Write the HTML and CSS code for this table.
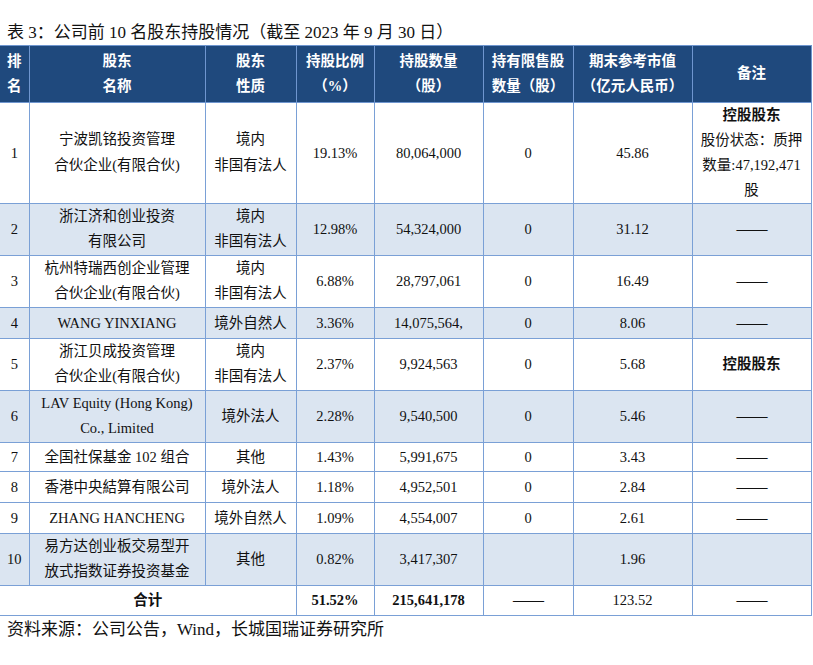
FILE: index.html
```html
<!DOCTYPE html>
<html lang="zh-CN">
<head>
<meta charset="utf-8">
<title>公司前10名股东持股情况</title>
<link rel="stylesheet" href="styles.css">
</head>
<body>
<div class="caption">表 3：公司前 10 名股东持股情况（截至 2023 年 9 月 30 日）</div>
<table class="holders">
  <colgroup>
    <col class="c-rank"><col class="c-name"><col class="c-type"><col class="c-pct">
    <col class="c-qty"><col class="c-lock"><col class="c-mv"><col class="c-note">
  </colgroup>
  <thead>
    <tr class="h-head">
      <th>排<br>名</th>
      <th>股东<br>名称</th>
      <th>股东<br>性质</th>
      <th>持股比例<br>（%）</th>
      <th>持股数量<br>（股）</th>
      <th>持有限售股<br>数量（股）</th>
      <th>期末参考市值<br>（亿元人民币）</th>
      <th>备注</th>
    </tr>
  </thead>
  <tbody>
    <tr class="h-r1">
      <td>1</td>
      <td class="two">宁波凯铭投资管理<br>合伙企业(有限合伙)</td>
      <td class="two">境内<br>非国有法人</td>
      <td>19.13%</td>
      <td>80,064,000</td>
      <td>0</td>
      <td>45.86</td>
      <td class="note"><b>控股股东</b><br>股份状态：质押<br>数量:47,192,471<br>股</td>
    </tr>
    <tr class="alt h-r2">
      <td>2</td>
      <td class="two">浙江济和创业投资<br>有限公司</td>
      <td class="two">境内<br>非国有法人</td>
      <td>12.98%</td>
      <td>54,324,000</td>
      <td>0</td>
      <td>31.12</td>
      <td class="dash">——</td>
    </tr>
    <tr class="h-r2b">
      <td>3</td>
      <td class="two">杭州特瑞西创企业管理<br>合伙企业(有限合伙)</td>
      <td class="two">境内<br>非国有法人</td>
      <td>6.88%</td>
      <td>28,797,061</td>
      <td>0</td>
      <td>16.49</td>
      <td class="dash">——</td>
    </tr>
    <tr class="alt h-s">
      <td>4</td>
      <td>WANG YINXIANG</td>
      <td>境外自然人</td>
      <td>3.36%</td>
      <td>14,075,564,</td>
      <td>0</td>
      <td>8.06</td>
      <td class="dash">——</td>
    </tr>
    <tr class="h-r2b">
      <td>5</td>
      <td class="two">浙江贝成投资管理<br>合伙企业(有限合伙)</td>
      <td class="two">境内<br>非国有法人</td>
      <td>2.37%</td>
      <td>9,924,563</td>
      <td>0</td>
      <td>5.68</td>
      <td><b>控股股东</b></td>
    </tr>
    <tr class="alt h-r2b">
      <td>6</td>
      <td class="two">LAV Equity (Hong Kong)<br>Co., Limited</td>
      <td>境外法人</td>
      <td>2.28%</td>
      <td>9,540,500</td>
      <td>0</td>
      <td>5.46</td>
      <td class="dash">——</td>
    </tr>
    <tr class="h-s0">
      <td>7</td>
      <td>全国社保基金 102 组合</td>
      <td>其他</td>
      <td>1.43%</td>
      <td>5,991,675</td>
      <td>0</td>
      <td>3.43</td>
      <td class="dash">——</td>
    </tr>
    <tr class="h-s">
      <td>8</td>
      <td>香港中央結算有限公司</td>
      <td>境外法人</td>
      <td>1.18%</td>
      <td>4,952,501</td>
      <td>0</td>
      <td>2.84</td>
      <td class="dash">——</td>
    </tr>
    <tr class="h-s">
      <td>9</td>
      <td>ZHANG HANCHENG</td>
      <td>境外自然人</td>
      <td>1.09%</td>
      <td>4,554,007</td>
      <td>0</td>
      <td>2.61</td>
      <td class="dash">——</td>
    </tr>
    <tr class="alt h-r2b">
      <td>10</td>
      <td class="two">易方达创业板交易型开<br>放式指数证券投资基金</td>
      <td>其他</td>
      <td>0.82%</td>
      <td>3,417,307</td>
      <td></td>
      <td>1.96</td>
      <td></td>
    </tr>
    <tr class="total h-s0">
      <td colspan="3"><b>合计</b></td>
      <td><b>51.52%</b></td>
      <td><b>215,641,178</b></td>
      <td class="dash">——</td>
      <td>123.52</td>
      <td class="dash">——</td>
    </tr>
  </tbody>
</table>
<div class="source">资料来源：公司公告，Wind，长城国瑞证券研究所</div>
</body>
</html>
```

FILE: styles.css
```css
html, body {
  margin: 0;
  padding: 0;
  background: #ffffff;
}

body {
  width: 813px;
  font-family: "Liberation Serif", "Noto Sans CJK SC", serif;
  color: #111111;
}

.caption {
  padding: 20px 0 0 7px;
  height: 25px;
  line-height: 25px;
  font-size: 17px;
  white-space: nowrap;
}

.holders {
  border-collapse: collapse;
  table-layout: fixed;
  width: 811px;
  font-size: 14.5px;
}

.c-rank { width: 29px; }
.c-name { width: 176px; }
.c-type { width: 91px; }
.c-pct { width: 78px; }
.c-qty { width: 109px; }
.c-lock { width: 90px; }
.c-mv { width: 119px; }
.c-note { width: 119px; }

.holders th,
.holders td {
  border: 1px solid #7aa0d6;
  padding: 0;
  text-align: center;
  vertical-align: middle;
  line-height: 20px;
  white-space: nowrap;
}

.holders td.two {
  line-height: 25.5px;
}

.holders th:first-child,
.holders td:first-child {
  border-left: none;
}

.holders th {
  background: #1f497d;
  color: #ffffff;
  font-weight: bold;
  line-height: 25px;
}

.holders thead th {
  border-color: #6f96cf;
}

.holders b {
  font-weight: bold;
}

.holders td.note {
  line-height: 25px;
}

.holders td.dash {
  font-size: 16px;
  letter-spacing: -1px;
}

.alt td {
  background: #dbe5f1;
}

.h-head { height: 56.75px; }
.h-r1 { height: 100.75px; }
.h-r2 { height: 51.75px; }
.h-r2b { height: 50.75px; }
.h-s { height: 30.75px; }
.h-s0 { height: 29.75px; }

.source {
  padding: 1px 0 0 7px;
  line-height: 25px;
  font-size: 17px;
  white-space: nowrap;
}
```
